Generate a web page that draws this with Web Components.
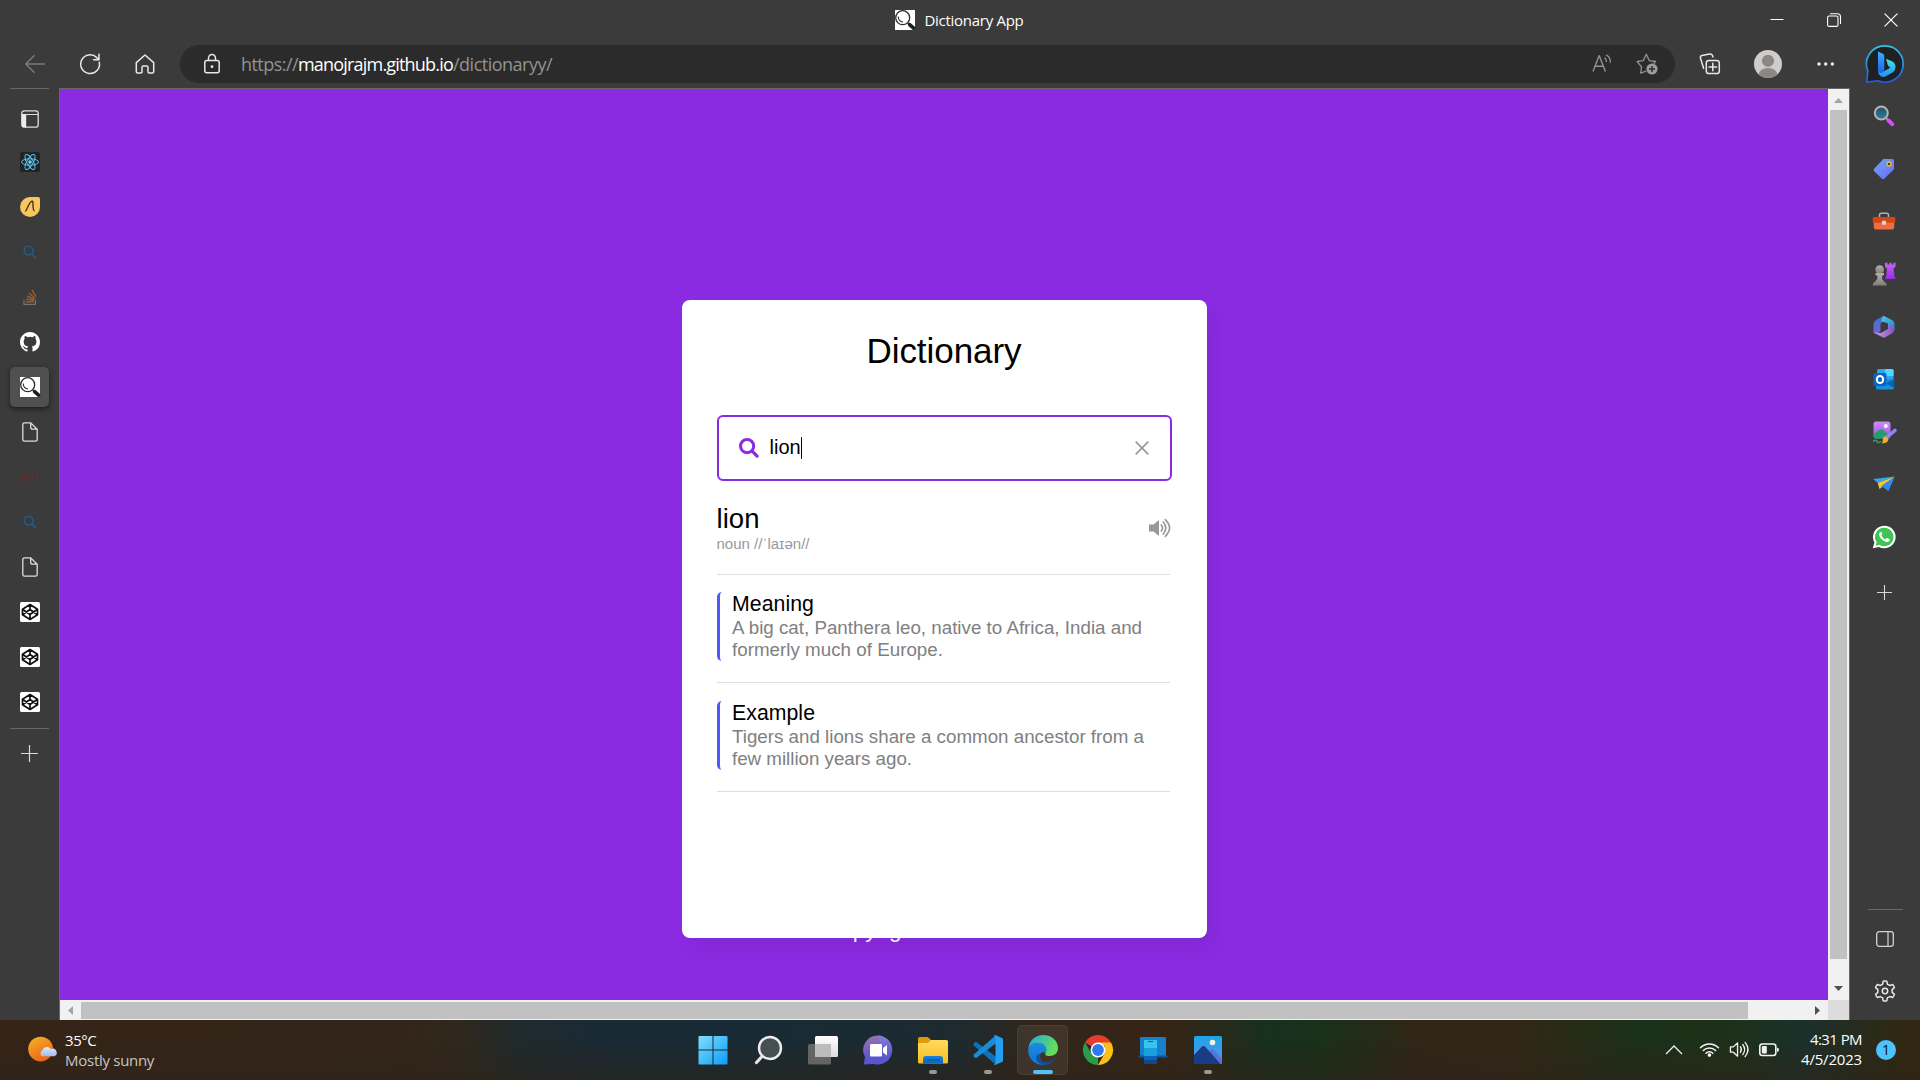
<!DOCTYPE html>
<html lang="en">
<head>
<meta charset="utf-8">
<title>Dictionary App</title>
<style>
html,body{margin:0;padding:0;background:#3b3b3b;overflow:hidden}
body{width:1920px;height:1080px;font-family:"Open Sans","Noto Sans",sans-serif}
</style>
</head>
<body>
<desktop-screen></desktop-screen>
<script>
const G=(id,a,b,x2=0,y2=1)=>`<linearGradient id="${id}" x1="0" y1="0" x2="${x2}" y2="${y2}"><stop stop-color="${a}"/><stop offset="1" stop-color="${b}"/></linearGradient>`;
const L='fill="none" stroke="#e8e8e8" stroke-width="1.5" stroke-linecap="round" stroke-linejoin="round"';
const magnify='<rect width="20" height="20" fill="#fff"/><circle cx="7.7" cy="7.7" r="7" fill="none" stroke="#2d2d2d" stroke-width="1.3"/><path d="M3.2 6.5C3.4 9.5 5.2 11.8 8 12" fill="none" stroke="#2d2d2d" stroke-width="1.1"/><path d="M12.6 12.8l1.8 1.5" stroke="#2d2d2d" stroke-width="1.2"/><path d="M14.6 14.6l4 3.6" stroke="#1e1e1e" stroke-width="3.6" stroke-linecap="round"/>';
const ICONS={
 back:[20,20,`<path d="M20 10H1M9.5 1.2L.8 10l8.7 8.8" fill="none" stroke="#7b7b7b" stroke-width="1.4"/>`],
 refresh:[22,22,`<path d="M20.3 9.3A9.4 9.4 0 1 1 17.6 4.4L19.7 6.6M20 1.3v5.5h-5.4" ${L}/>`],
 home:[20,20,`<path d="M1.3 8.6L10 1l8.7 7.6V17.7a1.2 1.2 0 0 1-1.2 1.2h-3.3a1.2 1.2 0 0 1-1.2-1.2v-4.2a1.5 1.5 0 0 0-1.5-1.5h-3a1.5 1.5 0 0 0-1.5 1.5v4.2a1.2 1.2 0 0 1-1.2 1.2H2.5a1.2 1.2 0 0 1-1.2-1.2z" ${L}/>`],
 lock:[18,20,`<rect x="1.8" y="6.5" width="14.4" height="12.3" rx="2" ${L}/><path d="M5.5 6.3V4a3.5 3.5 0 0 1 7 0v2.3" ${L}/><circle cx="9" cy="12.7" r="1.4" fill="#e8e8e8"/>`],
 read:[20,20,`<path d="M1 17.5L7 2h.4l6 15.5M3.3 12.3h8" fill="none" stroke="#929292" stroke-width="1.4"/><path d="M12.5 3.5a6 6 0 0 1 2 4.5M14 .8a8 8 0 0 1 4.3 8" fill="none" stroke="#929292" stroke-width="1.3"/>`],
 star:[22,22,`<path d="M10.2 18.2l-5.6 1.9 1-6.1L1.2 8.5l6-.9L10.3 1.2l3 6.4 6.3.9-2 2.3" fill="none" stroke="#929292" stroke-width="1.3" stroke-linejoin="round"/><circle cx="16" cy="16" r="5.6" fill="#9c9c9c"/><path d="M13 16h6M16 13v6" stroke="#2b2b2b" stroke-width="1.4"/>`],
 collections:[22,22,`<rect x="7.3" y="7.5" width="13" height="13" rx="2.6" ${L}/><path d="M10 14h7.6M13.8 10.2v7.6M4.6 15.3L1.5 5.2Q.9 3 3 2.4L10.5 1q2.2-.4 3 1.5l.5 1.4" ${L}/>`],
 avatar:[28,28,`<defs><clipPath id="c"><circle cx="14" cy="14" r="14"/></clipPath></defs><circle cx="14" cy="14" r="14" fill="#cecdcb"/><g clip-path="url(#c)" fill="#8a8886"><circle cx="14" cy="10.8" r="6.1"/><ellipse cx="14" cy="25" rx="9.5" ry="7"/></g>`],
 dots:[18,4,`<g fill="#eee"><circle cx="2" cy="2" r="1.7"/><circle cx="8.7" cy="2" r="1.7"/><circle cx="15.4" cy="2" r="1.7"/></g>`],
 bing:[40,40,`<defs>${G('a','#30c5e8','#2859d6')}${G('b','#3aaeff','#1b62e8')}${G('d','#45e3e0','#2290f5')}</defs><path d="M20 1.8a18.2 18.2 0 1 1-7 35L1.8 38 2.8 27A18.2 18.2 0 0 1 20 1.8z" fill="#1f2023" stroke="url(#a)" stroke-width="1.7"/><path d="M21 14.800L27 17.300Q31 19.500 30.500 24Q30 27 27.500 28.500L20.500 32.500Q16 34 13.500 29.500L13 26L19.300 27.300L25.500 23.600L23.800 22.500Q23 21.800 22.600 20.500z" fill="url(#d)"/><path d="M13 7.500l5 2.200q1.300.8 1.300 2.200v15.400L16.500 29q-3 .5-3.500-2.500z" fill="url(#b)"/>`],
 min:[14,14,`<path d="M.5 6.5h13" stroke="#fff" stroke-width="1"/>`],
 restore:[14,14,`<rect x=".6" y="3" width="10.4" height="10.4" rx="1.5" fill="none" stroke="#fff" stroke-width="1.1"/><path d="M3 .7h7.5a3 3 0 0 1 3 3V11" fill="none" stroke="#fff" stroke-width="1.1"/>`],
 close:[14,14,`<path d="M.6.6l12.8 12.8M13.4.6L.6 13.4" stroke="#fff" stroke-width="1.2"/>`],
 favicon:[20,20,magnify],
 tabs:[18,18,`<rect x=".8" y=".8" width="16.4" height="16.4" rx="2.5" fill="none" stroke="#dedede" stroke-width="1.3"/><path d="M.8 4.5h16.4" stroke="#dedede" stroke-width="1"/><path d="M.8 4.5h4.4v12.7H3A2.2 2.2 0 0 1 .8 15z" fill="#ececec"/>`],
 react:[20,20,`<rect width="20" height="20" rx="2.5" fill="#20232a"/><g fill="none" stroke="#61c9e8" stroke-width=".95"><ellipse cx="10" cy="10" rx="8.5" ry="3.2"/><ellipse cx="10" cy="10" rx="8.5" ry="3.2" transform="rotate(60 10 10)"/><ellipse cx="10" cy="10" rx="8.5" ry="3.2" transform="rotate(120 10 10)"/></g><circle cx="10" cy="10" r="1.8" fill="#75dcf8"/>`],
 apple:[20,20,`<path d="M10 0h8a2 2 0 0 1 2 2v8a10 10 0 1 1-10-10z" fill="#fac45e"/><path d="M5.400 14.500C7.500 11.500 8.500 6.500 11.500 4.300c1.300-.8 1.500.5 1.500 2.500.1 4-.2 6.500 1.500 7.200" fill="none" stroke="#3a2a10" stroke-width="1.300"/>`],
 bluesearch:[14,14,`<circle cx="5.6" cy="5.6" r="4.4" fill="none" stroke="#225b86" stroke-width="1.6"/><path d="M8.8 8.8l4 4" stroke="#225b86" stroke-width="1.8"/>`],
 stack:[14,16,`<path d="M1 10.5v4.8h11.5v-4.8" fill="none" stroke="#77736f" stroke-width="1.2"/><path d="M2.8 12.8h8M3 10l8 1.5M4 7l7.3 3.3M6 4l6 5.2M9 1l4 6.7" stroke="#975b30" stroke-width="1.5"/>`],
 github:[20,20,`<path transform="scale(1.25)" fill="#fff" d="M8 0C3.58 0 0 3.58 0 8c0 3.54 2.29 6.53 5.47 7.59.4.07.55-.17.55-.38 0-.19-.01-.82-.01-1.49-2.01.37-2.53-.49-2.69-.94-.09-.23-.48-.94-.82-1.13-.28-.15-.68-.52-.01-.53.63-.01 1.08.58 1.23.82.72 1.21 1.87.87 2.33.66.07-.52.28-.87.51-1.07-1.78-.2-3.64-.89-3.64-3.95 0-.87.31-1.59.82-2.15-.08-.2-.36-1.02.08-2.12 0 0 .67-.21 2.2.82a7.6 7.6 0 0 1 4 0c1.53-1.04 2.2-.82 2.2-.82.44 1.1.16 1.92.08 2.12.51.56.82 1.27.82 2.15 0 3.07-1.87 3.75-3.65 3.95.29.25.54.73.54 1.48 0 1.07-.01 1.93-.01 2.2 0 .21.15.46.55.38A8 8 0 0 0 16 8c0-4.42-3.58-8-8-8z"/>`],
 file:[16,20,`<path d="M2.5.8h6.2l6.5 6.4v10.3a1.7 1.7 0 0 1-1.7 1.7h-11A1.7 1.7 0 0 1 .8 17.500V2.500A1.700 1.700 0 0 1 2.500.8zM8.700.8v4.700a1.700 1.700 0 0 0 1.700 1.700h4.800" fill="none" stroke="#dedede" stroke-width="1.3"/>`],
 codepen:[20,20,`<rect width="20" height="20" rx="1.5" fill="#fff"/><path d="M10 2.500l7.500 4.700v5.600L10 17.500l-7.500-4.700V7.200zM10 2.500v5M10 12.500v5M2.500 7.200L10 12.500l7.500-5.300M2.500 12.800L10 7.500l7.500 5.300" fill="none" stroke="#111" stroke-width="1.7" stroke-linejoin="round"/>`],
 plus:[17,17,`<path d="M8.500 0v17M0 8.500h17" stroke="#d8d8d8" stroke-width="1.200"/>`],
 plussm:[15,15,`<path d="M7.500 0v15M0 7.500h15" stroke="#d8d8d8" stroke-width="1.100"/>`],
 lens:[22,22,`<defs>${G('a','#2a505e','#2480ae')}</defs><path d="M15.500 15.500l3.700 3.600" stroke="#d94df5" stroke-width="4" stroke-linecap="round"/><path d="M13 13l2 2" stroke="#999" stroke-width="2"/><circle cx="8.300" cy="8" r="6.500" fill="url(#a)" stroke="#b9b5b0" stroke-width="2"/>`],
 tag:[22,22,`<defs>${G('a','#6fa8fb','#6a68ee',1,1)}</defs><path d="M10.500 1h8.500a2 2 0 0 1 2 2v8.300L11 21Q9.700 21.500 8.700 20.500L1 13Q.2 11.700 1.200 10.700z" fill="url(#a)"/><circle cx="16" cy="6" r="2.700" fill="#f3bd27"/><circle cx="16" cy="6" r="1.300" fill="#473c25"/>`],
 toolbox:[24,18,`<path d="M7.500 5V3A1.800 1.800 0 0 1 9.300 1.200h5.400A1.800 1.800 0 0 1 16.500 3v2" fill="none" stroke="#aeb3b5" stroke-width="1.500"/><path d="M1.800 10h20.400v5.500a2 2 0 0 1-2 2H3.800a2 2 0 0 1-2-2z" fill="#ef6c43"/><rect x=".7" y="5" width="22.600" height="5.800" rx="1.200" fill="#d64515"/><circle cx="12" cy="10.700" r="2.300" fill="#d4d8d8"/>`],
 chess:[24,24,`<defs>${G('a','#c768f8','#9c28ea')}${G('b','#b3b1ae','#807d7a')}</defs><path d="M13 .8h2.500v1.700h2V.8h2v1.700h2V.8H23.500v4L21.500 6.500l.7 6.500 1.300 4H13l1.500-4 .5-6.500-2-1.700z" fill="url(#a)"/><g fill="url(#b)"><circle cx="7.700" cy="7.500" r="4.300"/><path d="M3.500 11h8.500v2l-2 1c0 3 .5 4.500 4.500 7.500v2H.8v-2C4.800 18.500 5.500 17 5.500 14l-2-1z"/></g>`],
 m365:[22,23,`<defs>${G('a','#3977ce','#785fd4')}${G('b','#50cbee','#2e7bd2',1,1)}${G('d','#d49ce8','#7e55c0',1,0)}</defs><path d="M10.500.8L3 5Q.5 6.500.5 9v9q4 1.500 7-2V8.500L13 5z" fill="url(#a)"/><path d="M10.500.8L19 5q2.500 1.500 2.500 4v6L15 11V8.500L8 6z" fill="url(#b)"/><path d="M.6 17.500L9.500 22.300q1.500.6 3 0L19.500 18q2-1.500 2-4v-2L15 10.500V14L7.500 18z" fill="url(#d)"/>`],
 outlook:[22,22,`<rect x="4" y="1" width="16.500" height="13" rx="1.500" fill="#28a8ea"/><path d="M12 1h7a1.500 1.500 0 0 1 1.500 1.500V8H12z" fill="#50d9ff"/><path d="M3 11h18v9a1.500 1.500 0 0 1-1.500 1.500h-15A1.500 1.500 0 0 1 3 20z" fill="#1490df"/><path d="M21.500 11v9L13 15.500z" fill="#0a5dab"/><rect x=".5" y="5" width="13" height="13" rx="1.500" fill="#0a64c0"/><ellipse cx="7" cy="11.500" rx="3.200" ry="3.600" fill="none" stroke="#fff" stroke-width="2"/>`],
 paint:[24,24,`<defs>${G('a','#c98cf7','#9e58dd')}</defs><rect x="1.500" y="1.500" width="17" height="17" rx="2.500" fill="url(#a)"/><path d="M1.500 14.500L7 10q2-1.500 4 0l7 6v.500a2 2 0 0 1-2 2H4a2.500 2.500 0 0 1-2.500-2.500z" fill="#239f68"/><circle cx="13.800" cy="6" r="1.900" fill="#fff"/><path d="M1 21.500c3-2 4-1 4 0s2 1.500 4 0" fill="none" stroke="#2ba36d" stroke-width="1.500"/><path d="M14.500 17.500L23 10.300" stroke="#8f83f0" stroke-width="3.600" stroke-linecap="round"/><path d="M13.500 16l3 3q0 4-7 4.500 1.500-1.500 1.300-3.500-.3-3 2.700-4z" fill="#f2ae2c"/>`],
 plane:[22,17,`<path d="M21.800.5L.2 3l4.600 4z" fill="#31a8ef"/><path d="M21.800.5L4.800 7l1.700 6z" fill="#f9c83c"/><path d="M21.800.5L6.500 13 9 9.300z" fill="#e59c1e"/><path d="M21.800.5L8.500 10l6.800 5.300z" fill="#328ced"/>`],
 whatsapp:[24,24,`<path d="M12.200.7a11.300 11.300 0 1 1-5.300 21.200L.8 23.300l1.600-5.800A11.300 11.300 0 0 1 12.200.7z" fill="#fff"/><path d="M12.200 2.800a9.200 9.200 0 1 1-4.800 17l-3.700 1 1-3.600a9.200 9.200 0 0 1 7.500-14.400z" fill="#3fc351"/><path d="M8.700 6.700q-2 .8-1.700 3 1.200 4.700 6.500 7.100 3 1 4.200-1.600.3-1-.3-1.200l-2-1q-.7-.2-1 .3l-.9 1.100q-2.700-1-4.200-3.900l.8-1.100q.2-.4 0-.8l-.8-1.800z" fill="#fff"/>`],
 panel:[18,16,`<rect x=".7" y=".7" width="16.600" height="14.600" rx="2.500" fill="none" stroke="#d4d4d4" stroke-width="1.300"/><path d="M12 1v14" stroke="#d4d4d4" stroke-width="1.200"/>`],
 gear:[22,22,`<path d="M8.600 4.200L9.200 1.200Q11 .7 12.800 1.200L13.400 4.200Q14.700 4.700 15.700 5.500L18.600 4.500Q19.900 5.800 20.400 7.600L18.100 9.600Q18.300 11 18.100 12.400L20.400 14.400Q19.900 16.200 18.600 17.500L15.700 16.500Q14.700 17.300 13.400 17.800L12.800 20.800Q11 21.300 9.200 20.800L8.600 17.800Q7.300 17.300 6.300 16.500L3.400 17.500Q2.100 16.200 1.600 14.400L3.900 12.400Q3.700 11 3.900 9.600L1.600 7.600Q2.100 5.800 3.400 4.500L6.300 5.500Q7.300 4.700 8.600 4.200z" ${L}/><circle cx="11" cy="11" r="2.700" ${L}/>`],
 search:[20,20,`<circle cx="8.100" cy="8.100" r="6.600" fill="none" stroke="#8a2be2" stroke-width="3"/><path d="M13.200 13.200l4.900 4.900" stroke="#8a2be2" stroke-width="3.300" stroke-linecap="round"/>`],
 clear:[14,14,`<path d="M.7.7l12.600 12.600M13.300.7L.7 13.300" stroke="#999" stroke-width="1.700"/>`],
 volume:[22,18,`<path d="M0 5.500h4.500L10 1v16L4.500 12.500H0z" fill="#999"/><path d="M12.300 6q2.500 3 0 6M14.300 3q5 6 0 12M16.300.7q8.500 8.300 0 16.600" fill="none" stroke="#999" stroke-width="1.700" stroke-linecap="round"/>`],
 weather:[30,28,`<defs>${G('a','#f3b72d','#ef6414',.5,1)}${G('b','#dceafc','#9cbcf0')}</defs><circle cx="13" cy="13.500" r="12.800" fill="url(#a)"/><path d="M14 21a4 4 0 0 1 .7-6 5 5 0 0 1 9-1.500 4 4 0 0 1 3.500 7.500z" fill="url(#b)"/>`],
 windows:[30,30,`<defs>${G('a','#7fe0fc','#0c9bf8',1,1)}</defs><path d="M1.500 1h13v13.500H.5V2a1 1 0 0 1 1-1zM15.500 1h13a1 1 0 0 1 1 1v12.500h-14zM.5 15.500h14v14h-13a1 1 0 0 1-1-1zM15.500 15.500h14v13a1 1 0 0 1-1 1h-13z" fill="url(#a)"/>`],
 tasksearch:[30,30,`<circle cx="17" cy="13" r="11" fill="#465054" stroke="#ededed" stroke-width="2.400"/><path d="M9 21.500L3.500 27.500" stroke="#e4e4e4" stroke-width="3.200" stroke-linecap="round"/>`],
 taskview:[30,30,`<defs>${G('a','#fff','#dcdcdc')}</defs><rect x="7" y="1" width="23" height="21" rx="1.500" fill="url(#a)"/><rect x="0" y="9" width="23" height="20.500" rx="1.500" fill="#646464"/><path d="M7 9h16v13H7z" fill="#bcbcbc"/>`],
 chat:[30,30,`<defs>${G('a','#a075aa','#5a55cf',.2,.8)}${G('b','#7b87ea','#5050c6')}</defs><path d="M15 .5a14.500 14.500 0 1 1-4 28.500L.8 29.500 2 22A14.500 14.500 0 0 1 15 .5z" fill="url(#a)"/><path d="M15 .5a14.500 14.500 0 0 1 5 28z" fill="url(#b)" opacity=".6"/><rect x="7" y="9" width="12" height="12.500" rx="1.200" fill="#fff"/><path d="M20 13l4-3v10.500l-4-3z" fill="#fff"/>`],
 folder:[30,30,`<defs>${G('a','#ffdc62','#fbbb20')}${G('b','#1784d8','#0e64ba')}</defs><path d="M0 4a2 2 0 0 1 2-2h7q1.500 0 2.500 1.500L13 5v6H0z" fill="#df9b08"/><path d="M0 8h10l3-3h15.500A1.500 1.500 0 0 1 30 6.500V27a1.500 1.500 0 0 1-1.500 1.500h-27A1.500 1.500 0 0 1 0 27z" fill="url(#a)"/><path d="M5 28.500V24a3 3 0 0 1 3-3h14a3 3 0 0 1 3 3v4.500z" fill="url(#b)"/><path d="M9 24.800h12" stroke="#0b4a8c" stroke-width="1"/>`],
 vscode:[30,30,`<path d="M.5 8.500L3 6.800l20 15V30L.8 10.500z" fill="#0a73bd"/><path d="M.5 21.500L3 23.200l20-15V0L.8 19.500z" fill="#178dd8"/><path d="M22 0l7 3a1.500 1.500 0 0 1 1 1.400V25.600A1.500 1.500 0 0 1 29 27l-7 3-1-.5 1.500-1.500V2L21 .5z" fill="#249ff0"/>`],
 edge:[30,30,`<defs>${G('a','#27a6e9','#62df58',1,.4)}${G('b','#1b8ce0','#1173d4')}</defs><path d="M.5 13C1.500 5 8 0 15 0c9 0 15 6 15 13 0 5-3.500 8-8.500 8-4 0-5-1.500-4-3 2.500-4-1-8-6-8-4 0-8 1-11 3z" fill="url(#a)"/><path d="M.2 15C.5 10 5 7.500 10 7.800c5 0 9 3.500 8.300 8-.5 2-.3 2.500-1 3-2-3-5.500-1-5.500 2.200 0 4 3 7.500 8 7.500C10 33 0 25.500.2 15z" fill="url(#b)"/><path d="M12 18.500c-2 6 3 10 9 8.500 3-.8 5-2.500 6.500-4.500C25 30 15 32 10 27c-3-4-2-7 2-8.500z" fill="#124e9d"/>`],
 chrome:[30,30,`<path d="M15 15L2 7.500A15 15 0 0 1 28 7.500z" fill="#e53c2d"/><path d="M2 7.500L8.500 18.750 15 22.500V30A15 15 0 0 1 2 7.500z" fill="#2a9d49"/><path d="M28 7.500A15 15 0 0 1 15 30l6.500-11.250L22 11l-7-3.500z" fill="#fbc116"/><circle cx="15" cy="15" r="7.500" fill="#fff"/><circle cx="15" cy="15" r="5.900" fill="#3379ee"/>`],
 phone:[30,30,`<rect x="2" y="2" width="26" height="20" rx="1" fill="#1581cc"/><path d="M.5 20.500h29v2H.5z" fill="#0d559d"/><rect x="6" y="5" width="13" height="24" rx="1" fill="#1d9ee0"/><path d="M6 8h13v5H6zM7 5h11a1 1 0 0 1 1 1v3H6V6a1 1 0 0 1 1-1z" fill="#38c5ed"/><path d="M6 21h13v4H6z" fill="#0a63bb"/><path d="M6 25h13v4H6z" fill="#124889"/><path d="M10 6.500h5" stroke="#0b6397" stroke-width="1.200"/>`],
 photos:[30,30,`<defs>${G('a','#1fa4e9','#5a93ea')}</defs><rect x="1" y="1" width="28" height="28" rx="1.500" fill="url(#a)"/><path d="M15 19l3-5 1.500-.3L29 24v4H15z" fill="#5973d6"/><path d="M1 20L9 11.500q1.500-1 3 0L27.500 29H2.500A1.500 1.500 0 0 1 1 27.500z" fill="#193c84"/><circle cx="19.500" cy="7.500" r="2.800" fill="#f8f1e0"/>`],
 chevron:[18,10,`<path d="M1 9l8-8 8 8" fill="none" stroke="#eee" stroke-width="1.300"/>`],
 wifi:[22,16,`<g fill="none" stroke="#f2f2f2" stroke-width="1.600" stroke-linecap="round"><path d="M1.500 6a13.300 13.300 0 0 1 19 0M4.500 9a9 9 0 0 1 13 0M7.400 11.800a5 5 0 0 1 7.200 0"/></g><circle cx="11" cy="13.800" r="1.900" fill="#fff"/>`],
 sound:[22,18,`<path d="M1.500 6.200h3L9 2v14l-4.500-4.200h-3z" fill="none" stroke="#f2f2f2" stroke-width="1.400" stroke-linejoin="round"/><path d="M12 6q2 3 0 6M14.500 3.700q4 5.300 0 10.600M17 1.500q6 7.500 0 15" fill="none" stroke="#f2f2f2" stroke-width="1.400" stroke-linecap="round"/>`],
 battery:[20,14,`<rect x=".8" y="1" width="16" height="11.500" rx="2.500" fill="none" stroke="#f2f2f2" stroke-width="1.600"/><rect x="2.800" y="3" width="5" height="7.500" rx="1" fill="#f2f2f2"/><path d="M18 4.500q2 .3 2 2.300t-2 2.300z" fill="#f2f2f2"/>`],
 up:[9,5,`<path d="M0 5L4.500 0 9 5z" fill="#a3a3a3"/>`],
 down:[9,5,`<path d="M0 0h9L4.500 5z" fill="#505050"/>`],
 left:[5,9,`<path d="M5 0v9L0 4.500z" fill="#a3a3a3"/>`],
 right:[5,9,`<path d="M0 0v9l5-4.500z" fill="#505050"/>`]
};
function define(name,html,ready){
  const t=document.createElement('template');t.innerHTML=html;
  customElements.define(name,class extends HTMLElement{
    constructor(){super();this.attachShadow({mode:'open'}).append(t.content.cloneNode(true));}
    connectedCallback(){ready&&ready(this,this.shadowRoot);}
  });
}
/* Vector icon picked by name; "scale" enlarges it. */
define('ui-icon','<style>:host{display:block;flex:none}svg{display:block;overflow:visible}</style>',(el,root)=>{
  const [w,h,body]=ICONS[el.getAttribute('name')],s=+(el.getAttribute('scale')||1);
  root.innerHTML+=`<svg width="${w*s}" height="${h*s}" viewBox="0 0 ${w} ${h}">${body}</svg>`;
});
/* A single line of text tracked to a set width. */
define('fit-text','<style>:host{display:block;width:max-content;white-space:pre}</style><slot></slot>',el=>{
  requestAnimationFrame(()=>fit(el));fit(el);
  function fit(e){e.style.letterSpacing='0px';const n=e.textContent.length,w=+e.getAttribute('width');
    if(w)e.style.letterSpacing=((w-e.getBoundingClientRect().width)/n).toFixed(3)+'px';}
});
define('icon-cell','<style>:host{display:flex;align-items:center;justify-content:center;flex:none}</style><slot></slot>');
define('title-bar',`<style>
:host{display:grid;grid-template-columns:1fr auto 1fr;height:40px;align-items:center}
.t{display:flex;align-items:center;gap:10px;color:#fff;font-size:15px;line-height:20px;padding-right:2px}
.c{display:flex;justify-content:flex-end;padding-right:1px}.c icon-cell{width:57px;height:38px}
</style><span></span><div class="t"><ui-icon name="favicon"></ui-icon><fit-text width="99">Dictionary App</fit-text></div>
<div class="c"><icon-cell><ui-icon name="min"></ui-icon></icon-cell><icon-cell><ui-icon name="restore"></ui-icon></icon-cell><icon-cell><ui-icon name="close"></ui-icon></icon-cell></div>`);
define('tool-bar',`<style>
:host{display:flex;height:48px;align-items:center;padding-left:7px;box-sizing:border-box}
icon-cell{width:55px}
.u{display:flex;align-items:center;box-sizing:border-box;width:1495px;height:38px;border-radius:19px;background:#2b2b2b;margin-left:8px;padding:0 6px 0 23px;font-size:18px;color:#929292}
.u fit-text{line-height:24px;padding-bottom:1px}
.u>ui-icon{margin-right:20px}.r{margin-left:auto;display:flex}.r icon-cell{width:45px}
icon-cell.w{width:58px}icon-cell.bing{width:62px}
</style>
<icon-cell><ui-icon name="back"></ui-icon></icon-cell><icon-cell><ui-icon name="refresh"></ui-icon></icon-cell><icon-cell><ui-icon name="home"></ui-icon></icon-cell>
<div class="u"><ui-icon name="lock"></ui-icon><fit-text width="57">https://</fit-text><fit-text width="155" style="color:#fff">manojrajm.github.io</fit-text><fit-text width="99">/dictionaryy/</fit-text>
<div class="r"><icon-cell><ui-icon name="read"></ui-icon></icon-cell><icon-cell><ui-icon name="star"></ui-icon></icon-cell></div></div>
<icon-cell class="w" style="margin-left:6px"><ui-icon name="collections"></ui-icon></icon-cell><icon-cell class="w"><ui-icon name="avatar"></ui-icon></icon-cell><icon-cell class="w" style="width:57px"><ui-icon name="dots"></ui-icon></icon-cell><icon-cell class="bing"><ui-icon name="bing"></ui-icon></icon-cell>`);
const cell=n=>`<icon-cell><ui-icon name="${n}"></ui-icon></icon-cell>`;
define('tab-rail',`<style>
:host{display:flex;flex-direction:column;align-items:center;width:59px;box-sizing:border-box}
hr{width:39px;height:1px;border:0;margin:0;background:#666;flex:none}
icon-cell{height:45px;width:39px}.first{height:50px;box-sizing:border-box;padding-top:10px}
.on{height:40px;margin:2.500px 0;border-radius:5px;background:#505050;box-shadow:0 2px 5px #0008}
.mr{font:700 11px "Liberation Sans",sans-serif;letter-spacing:-.3px;color:#592e2c}
.last{height:49px}
</style><hr><icon-cell class="first"><ui-icon name="tabs"></ui-icon></icon-cell>${['react','apple','bluesearch','stack','github'].map(cell).join('')}
<icon-cell class="on"><ui-icon name="favicon"></ui-icon></icon-cell>${cell('file')}<icon-cell><span class="mr">MR</span></icon-cell>${['bluesearch','file','codepen','codepen','codepen'].map(cell).join('')}
<hr style="margin-top:4px"><icon-cell class="last"><ui-icon name="plus"></ui-icon></icon-cell>`);
define('app-rail',`<style>
:host{display:flex;flex-direction:column;align-items:center;width:70px;box-sizing:border-box;padding:2px 2px 0 0}
icon-cell{height:52.600px;width:60px}hr{width:35px;height:1px;border:0;margin:auto -2px 0 0;background:#6a6a6a;flex:none}
.p{height:59px}
</style>${['lens','tag','toolbox','chess','m365','outlook','paint','plane','whatsapp'].map(cell).join('')}<icon-cell class="p"><ui-icon name="plussm"></ui-icon></icon-cell>
<hr><icon-cell style="height:58px;padding-left:2px"><ui-icon name="panel"></ui-icon></icon-cell><icon-cell style="height:46px;padding-left:2px"><ui-icon name="gear"></ui-icon></icon-cell><div style="height:6px"></div>`);
define('scroll-bar',`<style>
:host{display:flex;background:#f1f1f1;align-items:center;box-sizing:border-box}
:host([axis=y]){flex-direction:column;width:21px;height:911px}
:host([axis=x]){height:20px;width:1768px}
icon-cell{width:21px;height:21px}.thumb{background:#c1c1c1}
:host([axis=y]) .thumb{width:17px;height:849px}:host([axis=x]) .thumb{height:17px;width:1667px}
:host([axis=y]) .a{box-sizing:border-box;padding-top:2px}:host([axis=y]) .b{box-sizing:border-box;padding-bottom:2px}
.b{margin-top:auto}:host([axis=x]) .b{margin:0 0 0 auto}:host([axis=x]) icon-cell{height:20px}
</style><icon-cell class="a"></icon-cell><div class="thumb"></div><icon-cell class="b"></icon-cell>`,(el,r)=>{
  const y=el.getAttribute('axis')==='y';
  r.querySelector('.a').innerHTML=`<ui-icon name="${y?'up':'left'}"></ui-icon>`;
  r.querySelector('.b').innerHTML=`<ui-icon name="${y?'down':'right'}"></ui-icon>`;
});
define('search-field',`<style>
:host{display:flex;align-items:center;box-sizing:border-box;width:455px;height:66px;border:2px solid #8a2be2;border-radius:6px;padding:0 21px 1px 20px;font-size:20px;line-height:24px;color:#000}
i{width:1px;height:22px;background:#000}fit-text{margin-left:11px;padding-bottom:1px}ui-icon+fit-text+i+ui-icon{margin-left:auto}
</style><ui-icon name="search"></ui-icon><fit-text width="31"><slot></slot></fit-text><i></i><ui-icon name="clear"></ui-icon>`);
define('word-entry',`<style>
:host{display:flex;justify-content:space-between;width:455px;height:93px;box-sizing:border-box;padding:21px .500px 0 0}
.w{font-size:27.500px;line-height:34px;color:#000}.p{font-size:15px;line-height:16px;color:#999}ui-icon{margin-top:17px}
</style><div><fit-text class="w" width="43"><slot name="word"></slot></fit-text><fit-text class="p" width="93"><slot name="phonetic"></slot></fit-text></div><ui-icon name="volume"></ui-icon>`,(el,r)=>{
  r.querySelectorAll('fit-text').forEach((f,i)=>{const s=el.children[i];if(s){f.textContent=s.textContent;}});
});
define('definition-block',`<style>
:host{display:block;box-sizing:border-box;width:453px;height:109px;border-top:1px solid #ddd;padding-top:17px}
div{box-sizing:border-box;height:69px;border-left:3.750px solid #4d59fb;border-radius:5px;padding-left:12.500px}
.h{font-size:21.250px;line-height:24px;margin-bottom:1px;color:#000}::slotted(fit-text){font-size:18.750px;line-height:22px;color:#808080}
</style><div><fit-text class="h"></fit-text><slot></slot></div>`,(el,r)=>{
  const h=r.querySelector('.h');h.setAttribute('width',el.getAttribute('w'));h.textContent=el.getAttribute('heading');
});
define('dictionary-card',`<style>
:host{display:flex;flex-direction:column;box-sizing:border-box;width:525px;height:638px;background:#fff;border-radius:8px;padding:30px 35px;box-shadow:9px 12px 18px rgba(0,0,0,.06);font-family:"Liberation Sans",Arial,sans-serif;position:relative;z-index:1}
h1{margin:0 auto;font-size:35px;line-height:42px;font-weight:400;color:#000}
search-field{margin-top:43px}.end{width:453px;height:1px;background:#ddd}
</style><h1><fit-text width="155">Dictionary</fit-text></h1><search-field>lion</search-field>
<word-entry><span slot="word">lion</span><span slot="phonetic">noun //ˈlaɪən//</span></word-entry>
<definition-block heading="Meaning" w="82" style="height:108px"><fit-text width="410">A big cat, Panthera leo, native to Africa, India and</fit-text><fit-text width="211">formerly much of Europe.</fit-text></definition-block>
<definition-block heading="Example" w="83" style="padding-top:18px"><fit-text width="412">Tigers and lions share a common ancestor from a</fit-text><fit-text width="180">few million years ago.</fit-text></definition-block>
<div class="end"></div>`);
define('web-page',`<style>
:host{display:flex;flex-direction:column;align-items:center;width:1768px;height:911px;background:#8a2be2;box-sizing:border-box;padding-top:211px;overflow:hidden}
p{margin:-21px 0 0;align-self:flex-start;padding-left:764px;color:#fff;font:22.500px/26px "Liberation Sans",Arial,sans-serif}
</style><dictionary-card></dictionary-card><p>Copyright</p>`);
define('page-frame',`<style>
:host{display:grid;grid-template-columns:1768px 21px;grid-template-rows:911px 20px;border-left:1px solid #686868;border-top:1px solid #686868;border-right:1px solid #686868;box-sizing:border-box;width:1791px;background:#dcdcdc}
</style><web-page></web-page><scroll-bar axis="y"></scroll-bar><scroll-bar axis="x"></scroll-bar>`);
define('task-app',`<style>
:host{display:flex;flex-direction:column;align-items:center;box-sizing:border-box;width:51px;height:50px;margin:5px 2px 0;padding-top:9px;border:1px solid transparent;border-radius:5px}
:host([active]){background:#ffffff12;border-color:#ffffff0d}
i{width:8px;height:4px;border-radius:2px;margin-top:5px}:host([open]) i{background:#9b9893}:host([active]) i{width:20px;background:#4cc2ff}
</style><slot></slot><i></i>`);
const task=(n,a='')=>`<task-app ${a}><ui-icon name="${n}"></ui-icon></task-app>`;
define('task-bar',`<style>
:host{display:flex;height:60px;color:#fff;background:linear-gradient(180deg,transparent 30%,rgba(45,35,24,.55)),linear-gradient(90deg,#352417 0,#33251a 21%,#2f281c 24%,#1f2a2d 27%,#1a2a35 31%,#182b35 40%,#1d2a30 50%,#33251a 54%,#352517 61%,#17301f 66%,#1a3019 69%,#312517 74%,#322717 79%,#1b3018 85%,#1d3119 90%,#1b302b 94%,#302812 99%)}
.l{display:flex;width:685px;box-sizing:border-box;padding:16px 0 0 28px;gap:8px;font-size:15px;line-height:20px}.l div{margin-top:-6px}.l .s{color:#c9c6c3}
.m{display:flex;width:935px}.r{display:flex;align-items:center;font-size:15px;line-height:20px}
.k{width:88px;display:flex;flex-direction:column;align-items:flex-end;padding-bottom:2px}
.n{width:20px;height:20px;border-radius:50%;background:#4cc2ff;color:#111;font-size:14px;text-align:center;margin-left:14px}
</style><div class="l"><ui-icon name="weather" scale=".97"></ui-icon><div><fit-text width="31">35°C</fit-text><fit-text class="s" width="89">Mostly sunny</fit-text></div></div>
<div class="m">${task('windows')+task('tasksearch')+task('taskview')+task('chat')+task('folder','open')+task('vscode','open')+task('edge','active')+task('chrome')+task('phone')+task('photos','open')}</div>
<div class="r"><icon-cell style="width:38px;margin-left:35px"><ui-icon name="chevron"></ui-icon></icon-cell><icon-cell style="width:32px"><ui-icon name="wifi" scale=".95"></ui-icon></icon-cell><icon-cell style="width:29px"><ui-icon name="sound" scale=".95"></ui-icon></icon-cell><icon-cell style="width:30px"><ui-icon name="battery"></ui-icon></icon-cell>
<div class="k" style="margin-left:-10px"><fit-text width="52">4:31 PM</fit-text><fit-text width="61">4/5/2023</fit-text></div><div class="n">1</div></div>`);
define('desktop-screen',`<style>
:host{display:flex;flex-direction:column;width:1920px;height:1080px;background:#3b3b3b}
main{display:flex;height:932px}
</style><title-bar></title-bar><tool-bar></tool-bar><main><tab-rail></tab-rail><page-frame></page-frame><app-rail></app-rail></main><task-bar></task-bar>`);
</script>
</body>
</html>
